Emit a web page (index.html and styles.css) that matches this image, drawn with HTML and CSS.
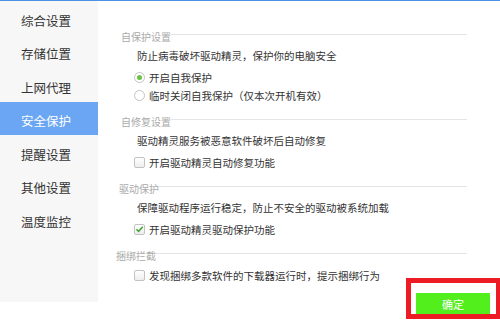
FILE: index.html
```html
<!DOCTYPE html>
<html lang="zh-CN">
<head>
    <meta charset="UTF-8">
    <title>设置</title>
    <link rel="stylesheet" href="styles.css">
</head>
<body>
    <div class="top-line"></div>
    <div class="main">
        <ul class="side-menu">
            <li class="menu-item">综合设置</li>
            <li class="menu-item">存储位置</li>
            <li class="menu-item">上网代理</li>
            <li class="menu-item active">安全保护</li>
            <li class="menu-item">提醒设置</li>
            <li class="menu-item">其他设置</li>
            <li class="menu-item">温度监控</li>
        </ul>

        <div class="content">
            <div class="section sec-self">
                <div class="sec-title"><span>自保护设置</span><i class="rule"></i></div>
                <div class="desc">防止病毒破坏驱动精灵，保护你的电脑安全</div>
                <label class="option"><span class="radio checked"></span>开启自我保护</label>
                <label class="option"><span class="radio"></span>临时关闭自我保护（仅本次开机有效）</label>
            </div>

            <div class="section">
                <div class="sec-title"><span>自修复设置</span><i class="rule"></i></div>
                <div class="desc">驱动精灵服务被恶意软件破坏后自动修复</div>
                <label class="option"><span class="check"></span>开启驱动精灵自动修复功能</label>
            </div>

            <div class="section sec-driver">
                <div class="sec-title"><span>驱动保护</span><i class="rule"></i></div>
                <div class="desc">保障驱动程序运行稳定，防止不安全的驱动被系统加载</div>
                <label class="option">
                    <span class="check">
                        <svg viewBox="0 0 10 10" width="10" height="10"><path d="M1.6 5.2 L4 7.6 L8.6 2.4" fill="none" stroke="#3fa52c" stroke-width="1.6"/></svg>
                    </span>开启驱动精灵驱动保护功能
                </label>
            </div>

            <div class="section sec-bundle">
                <div class="sec-title"><span>捆绑拦截</span><i class="rule"></i></div>
                <label class="option opt-first"><span class="check"></span>发现捆绑多款软件的下载器运行时，提示捆绑行为</label>
            </div>

            <div class="footer">
                <div class="btn-wrap">
                    <button class="ok-btn">确定</button>
                    <div class="mark"></div>
                </div>
            </div>
        </div>
    </div>
</body>
</html>
```

FILE: styles.css
```css
* {
    margin: 0;
    padding: 0;
    box-sizing: border-box;
}

body {
    width: 500px;
    height: 323px;
    overflow: hidden;
    background: #fff;
    font-family: "Noto Sans CJK SC", "Noto Sans", sans-serif;
    color: #333;
}

.top-line {
    height: 1px;
    background: #4a92e6;
}

.main {
    display: flex;
    align-items: flex-start;
}

/* left menu */
.side-menu {
    list-style: none;
    width: 98px;
    height: 301px;
    background: #f7f7f7;
}

.menu-item {
    height: 33.5px;
    display: flex;
    align-items: center;
    padding: 5px 0 0 21px;
    font-size: 12.5px;
    color: #333;
}

.menu-item.active {
    background: #6aa6f3;
    color: #fff;
}

/* right panel */
.content {
    flex: 1;
    padding: 29px 33px 0 23px;
}

.section {
    margin-top: 11px;
}

.section.sec-self {
    margin-top: 0;
}

.sec-title {
    display: flex;
    align-items: flex-start;
    height: 14px;
    line-height: 14px;
    font-size: 10px;
    color: #aaa;
}

.sec-driver .sec-title {
    margin-left: -2px;
}

.sec-bundle .sec-title {
    margin-left: -5px;
}

.rule {
    flex: 1;
    height: 1px;
    margin-top: 4px;
    background: #e4e4e4;
}

.desc {
    height: 24px;
    line-height: 24px;
    padding-left: 16px;
    font-size: 10.5px;
}

.option {
    display: flex;
    align-items: center;
    height: 18px;
    padding-left: 13px;
    font-size: 10.5px;
}

.option.opt-first {
    margin-top: 3px;
}

.radio {
    width: 11px;
    height: 11px;
    margin-right: 4px;
    border: 1px solid #c4c4c4;
    border-radius: 50%;
    background: #fff;
    display: flex;
    align-items: center;
    justify-content: center;
}

.radio.checked::after {
    content: "";
    width: 5px;
    height: 5px;
    border-radius: 50%;
    background: #6cc145;
}

.check {
    width: 11px;
    height: 11px;
    margin-right: 4px;
    border: 1px solid #c2c2c2;
    border-radius: 2px;
    background: linear-gradient(#fff, #eee);
    display: flex;
    align-items: center;
    justify-content: center;
}

.footer {
    display: flex;
    justify-content: flex-end;
    margin: 9px -23px 0 0;
}

.btn-wrap {
    position: relative;
}

.ok-btn {
    display: block;
    width: 74px;
    height: 21px;
    border: none;
    background: #53ef1d;
    color: #fff;
    font-family: "Noto Sans CJK SC", sans-serif;
    font-size: 11px;
}

/* red annotation frame */
.mark {
    position: absolute;
    top: -15px;
    left: -10px;
    right: -11px;
    bottom: -5px;
    border: 5px solid #ed1c24;
    pointer-events: none;
}
```
